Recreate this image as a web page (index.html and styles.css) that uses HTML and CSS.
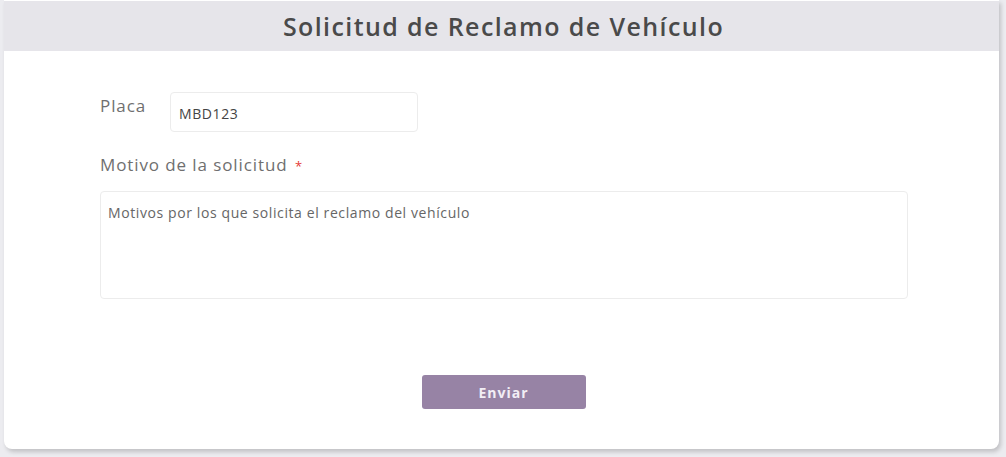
FILE: index.html
```html
<!DOCTYPE html>
<html lang="es">
<head>
    <meta charset="UTF-8">
    <meta name="viewport" content="width=device-width, initial-scale=1.0">
    <title>Solicitud de Reclamo de Vehículo</title>
    <link rel="stylesheet" href="styles.css">
</head>
<body>

<div class="card">
    <div class="card-header">
        <h2>Solicitud de Reclamo de Vehículo</h2>
    </div>
    <form class="card-body" id="reclamo-form">
        <div class="row-placa">
            <label for="placa">Placa</label>
            <input type="text" id="placa" name="placa" value="MBD123">
        </div>

        <label for="motivo" class="label-block">Motivo de la solicitud <span class="req">*</span></label>
        <textarea id="motivo" name="motivo" placeholder="Motivos por los que solicita el reclamo del vehículo"></textarea>

        <div class="actions">
            <button type="submit">Enviar</button>
        </div>
    </form>
</div>

</body>
</html>
```

FILE: styles.css
```css
body {
    margin: 0;
    background: #ececf0;
    font-family: 'Open Sans', sans-serif;
    height: 457px;
    overflow: hidden;
}

.card {
    margin: 0 7px 0 4px;
    height: 449px;
    background: #fff;
    border-radius: 0 0 8px 8px;
    box-shadow: 2px 3px 4px rgba(0, 0, 0, 0.18);
    overflow: hidden;
    display: flex;
    flex-direction: column;
}

/* Header strip */
.card-header {
    background: #e6e5ea;
    height: 50px;
    margin-top: 1px;
    display: flex;
    align-items: center;
    justify-content: center;
}

.card-header h2 {
    margin: 0;
    font-family: 'Open Sans', sans-serif;
    font-weight: 600;
    font-size: 25px;
    color: #4a4a4a;
    letter-spacing: 1.4px;
    padding-left: 4px;
}

.card-body {
    padding: 40px 92px 0 96px;
    display: flex;
    flex-direction: column;
}

/* Placa row */
.row-placa {
    display: flex;
    align-items: flex-start;
    gap: 20px;
}

.row-placa label {
    font-size: 17px;
    color: #6f6f6f;
    padding-top: 3px;
    width: 50px;
    letter-spacing: 0.9px;
}

input, textarea {
    font-family: 'Open Sans', sans-serif;
    font-size: 14px;
    letter-spacing: 0.6px;
    color: #444;
    border: 1px solid #ececec;
    border-radius: 4px;
    box-sizing: border-box;
    outline: none;
}

input {
    width: 248px;
    height: 40px;
    margin-top: 1px;
    padding: 10px 8px 8px;
}

.label-block {
    margin-top: 21px;
    font-size: 17px;
    color: #6f6f6f;
    letter-spacing: 0.9px;
}

.req {
    color: #e53935;
    font-size: 13px;
    margin-left: 2px;
}

textarea {
    margin-top: 15px;
    width: 808px;
    height: 108px;
    padding: 11px 7px;
    resize: none;
}

textarea::placeholder {
    color: #666;
}

.actions {
    display: flex;
    justify-content: center;
    margin-top: 76px;
}

button {
    width: 164px;
    height: 34px;
    background: #9783a5;
    color: #f2eef5;
    border: none;
    border-radius: 3px;
    font-family: 'Open Sans', sans-serif;
    font-weight: 700;
    font-size: 14px;
    letter-spacing: 1px;
    cursor: pointer;
}
```
